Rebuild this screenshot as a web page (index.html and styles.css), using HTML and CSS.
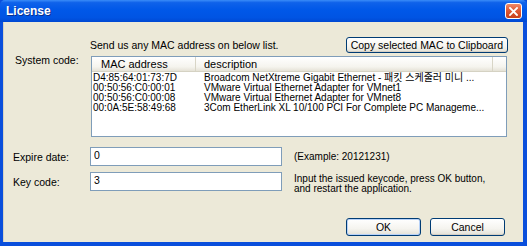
FILE: index.html
```html
<!DOCTYPE html>
<html lang="en">
  <head>
    <meta charset="UTF-8" />
    <meta name="viewport" content="width=device-width, initial-scale=1.0" />
    <title>License</title>
    <link rel="stylesheet" href="styles.css">
  </head>
  <body>
    <div class="window">
      <div class="titlebar">
        <span class="title">License</span>
        <span class="close">
          <svg width="9" height="9" viewBox="0 0 9 9">
            <path d="M1 1 L8 8 M8 1 L1 8" stroke="#fff" stroke-width="1.8" stroke-linecap="square" />
          </svg>
        </span>
      </div>

      <div class="client">
        <div class="row top-row">
          <span class="label"></span>
          <div class="send">
            <span>Send us any MAC address on below list.</span>
            <button class="btn copy">Copy selected MAC to Clipboard</button>
          </div>
        </div>

        <div class="row list-row">
          <span class="label">System code:</span>
          <div class="listview">
            <div class="lv-header">
              <span class="col mac">MAC address</span>
              <span class="col desc">description</span>
              <span class="col rest"></span>
            </div>
            <div class="lv-body">
              <div class="lv-item"><span class="mac">D4:85:64:01:73:7D</span><span class="desc">Broadcom NetXtreme Gigabit Ethernet - 패킷 스케줄러 미니 ...</span></div>
              <div class="lv-item"><span class="mac">00:50:56:C0:00:01</span><span class="desc">VMware Virtual Ethernet Adapter for VMnet1</span></div>
              <div class="lv-item"><span class="mac">00:50:56:C0:00:08</span><span class="desc">VMware Virtual Ethernet Adapter for VMnet8</span></div>
              <div class="lv-item"><span class="mac">00:0A:5E:58:49:68</span><span class="desc">3Com EtherLink XL 10/100 PCI For Complete PC Manageme...</span></div>
            </div>
          </div>
        </div>

        <div class="row field-row expire">
          <span class="label">Expire date:</span>
          <input class="textbox" type="text" value="0" />
          <span class="hint">(Example: 20121231)</span>
        </div>

        <div class="row field-row key">
          <span class="label">Key code:</span>
          <input class="textbox" type="text" value="3" />
          <span class="hint">Input the issued keycode, press OK button,<br />and restart the application.</span>
        </div>

        <div class="actions">
          <button class="btn default">OK</button>
          <button class="btn">Cancel</button>
        </div>
      </div>
    </div>
  </body>
</html>
```

FILE: styles.css
```css
* {
  margin: 0;
  padding: 0;
  box-sizing: border-box;
}

body {
  width: 527px;
  height: 246px;
  overflow: hidden;
  font-family: "Liberation Sans", Arial, "Noto Sans CJK KR", sans-serif;
  font-size: 10.5px;
  color: #000;
}

.window {
  width: 527px;
  height: 246px;
  display: flex;
  flex-direction: column;
  background: #0a4fdc;
}

.titlebar {
  height: 22px;
  display: flex;
  align-items: center;
  justify-content: space-between;
  padding: 0 5px 0 6px;
  background: linear-gradient(to bottom, #3a8cf8 0%, #0f62ea 12%, #0058e8 45%, #0054e3 80%, #0048d2 100%);
  border-radius: 5px 5px 0 0;
}

.title {
  color: #fff;
  font-weight: bold;
  font-size: 12px;
  text-shadow: 1px 1px 0 #0a2f8c;
}

.close {
  width: 17px;
  height: 16px;
  display: flex;
  align-items: center;
  justify-content: center;
  border: 1px solid #fff;
  border-radius: 3px;
  background: linear-gradient(to bottom, #f08a6a 0%, #e05a36 45%, #c8401a 100%);
}

.client {
  flex: 1;
  margin: 0 4px 4px 3px;
  padding: 15px 15px 0 9px;
  background: #ece9d8;
  border-left: 1px solid #d6d3c2;
}

.row {
  display: flex;
  align-items: flex-start;
}

.label {
  width: 77px;
  flex: none;
}

.top-row {
  height: 16px;
}

.send {
  flex: 1;
  display: flex;
  align-items: center;
  justify-content: space-between;
}

.btn {
  font-family: inherit;
  font-size: 10.5px;
  color: #000;
  height: 16px;
  border: 1px solid #003c74;
  border-radius: 3px;
  background: linear-gradient(to bottom, #ffffff 0%, #f5f4ef 60%, #e3e1d6 100%);
  box-shadow: inset 0 -1px 0 #d6d0c5;
}

.copy {
  padding: 0 4px;
}

.list-row {
  margin-top: 3px;
}

.list-row .label {
  padding-left: 2px;
  margin-top: -2px;
}

.listview {
  margin-left: 1px;
  width: 416px;
  height: 81px;
  background: #fff;
  border: 1px solid #7f9db9;
}

.lv-header {
  height: 15px;
  display: flex;
  background: linear-gradient(to bottom, #ffffff 0%, #f5f4ee 70%, #e5e2d6 100%);
  border-bottom: 1px solid #d5d2c3;
}

.lv-header .col {
  height: 14px;
  line-height: 14px;
  font-size: 11px;
  border-right: 1px solid #d8d5c6;
}

.lv-header .mac {
  width: 104px;
  padding-left: 9px;
}

.lv-header .desc {
  width: 297px;
  padding-left: 8px;
}

.lv-header .rest {
  flex: 1;
  border-right: none;
}

.lv-body {
  padding-top: 1px;
}

.lv-item {
  display: flex;
  height: 10px;
  line-height: 10px;
  font-size: 10px;
  white-space: nowrap;
}

.lv-item .mac {
  width: 112px;
  padding-left: 1px;
}

.field-row {
  align-items: center;
  height: 19px;
}

.expire {
  margin-top: 10px;
}

.key {
  margin-top: 6px;
}

.textbox {
  width: 192px;
  height: 19px;
  border: 1px solid #7f9db9;
  background: #fff;
  font-family: inherit;
  font-size: 10.5px;
  padding: 0 3px 3px;
  outline: none;
}

.hint {
  margin-left: 12px;
  font-size: 10px;
  line-height: 10px;
}

.key .hint {
  align-self: flex-start;
  margin-top: 2px;
}

.actions {
  margin-top: 27px;
  display: flex;
  justify-content: flex-end;
  gap: 9px;
  padding-right: 3px;
}

.actions .btn {
  width: 75px;
  height: 18px;
}

.actions .default {
  border-color: #003c74;
  box-shadow: inset 0 0 0 1px #b8d2f8, inset 0 -1px 0 #89adf0;
}
```
